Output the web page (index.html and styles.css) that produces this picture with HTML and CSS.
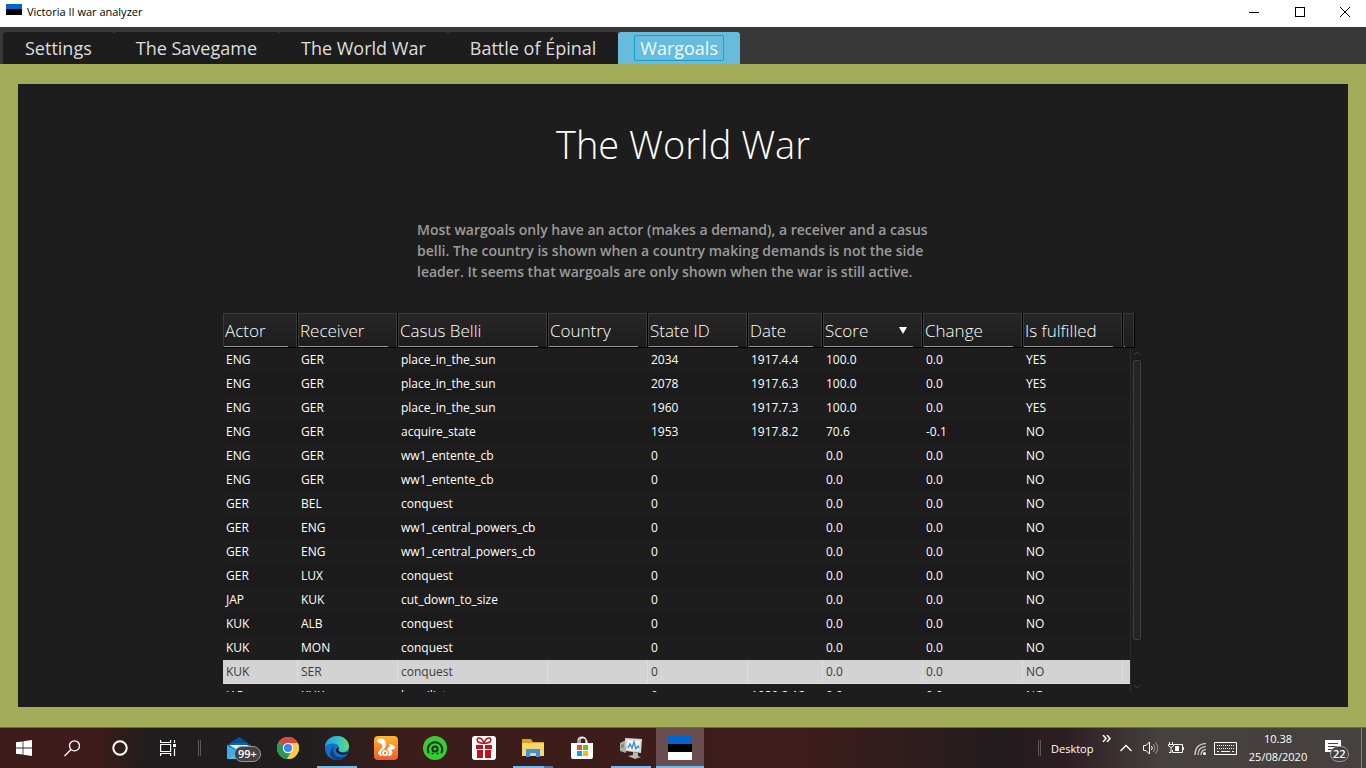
FILE: index.html
```html
<!DOCTYPE html>
<html lang="en">
<head>
<meta charset="utf-8">
<title>Victoria II war analyzer</title>
<link rel="stylesheet" href="styles.css">
</head>
<body>
<header class="titlebar">
  <span class="flag flag-small"></span>
  <span class="app-name">Victoria II war analyzer</span>
  <div class="window-controls">
    <button aria-label="Minimize"><svg width="10" height="10" shape-rendering="crispEdges"><path d="M0 5.5h10" stroke="#000"/></svg></button>
    <button aria-label="Maximize"><svg width="10" height="10" shape-rendering="crispEdges"><path d="M.5.5h9v9h-9z" fill="none" stroke="#000"/></svg></button>
    <button aria-label="Close"><svg width="10" height="10"><path d="M0 0l10 10M10 0L0 10" stroke="#000"/></svg></button>
  </div>
</header>
<nav class="tabs">
  <button class="tab">Settings</button>
  <button class="tab">The Savegame</button>
  <button class="tab">The World War</button>
  <button class="tab">Battle of Épinal</button>
  <button class="tab active"><span>Wargoals</span></button>
</nav>
<main class="frame">
  <section class="panel">
    <h1>The World War</h1>
    <p class="intro">Most wargoals only have an actor (makes a demand), a receiver and a casus<br>belli. The country is shown when a country making demands is not the side<br>leader. It seems that wargoals are only shown when the war is still active.</p>
    <div class="table-view">
      <table>
        <colgroup><col class="c75"><col class="c100"><col class="c150"><col class="c100"><col class="c100"><col class="c75"><col class="c100"><col class="c100"><col class="c100"><col></colgroup>
        <thead>
          <tr><th>Actor</th><th>Receiver</th><th>Casus Belli</th><th>Country</th><th>State ID</th><th>Date</th><th><div class="sorted">Score<svg width="8" height="7"><path d="M0 0h8L4 7z" fill="#fff"/></svg></div></th><th>Change</th><th>Is fulfilled</th><th></th></tr>
        </thead>
        <tbody>
          <tr><td>ENG</td><td>GER</td><td>place_in_the_sun</td><td></td><td>2034</td><td>1917.4.4</td><td>100.0</td><td>0.0</td><td>YES</td><td></td></tr>
          <tr><td>ENG</td><td>GER</td><td>place_in_the_sun</td><td></td><td>2078</td><td>1917.6.3</td><td>100.0</td><td>0.0</td><td>YES</td><td></td></tr>
          <tr><td>ENG</td><td>GER</td><td>place_in_the_sun</td><td></td><td>1960</td><td>1917.7.3</td><td>100.0</td><td>0.0</td><td>YES</td><td></td></tr>
          <tr><td>ENG</td><td>GER</td><td>acquire_state</td><td></td><td>1953</td><td>1917.8.2</td><td>70.6</td><td>-0.1</td><td>NO</td><td></td></tr>
          <tr><td>ENG</td><td>GER</td><td>ww1_entente_cb</td><td></td><td>0</td><td></td><td>0.0</td><td>0.0</td><td>NO</td><td></td></tr>
          <tr><td>ENG</td><td>GER</td><td>ww1_entente_cb</td><td></td><td>0</td><td></td><td>0.0</td><td>0.0</td><td>NO</td><td></td></tr>
          <tr><td>GER</td><td>BEL</td><td>conquest</td><td></td><td>0</td><td></td><td>0.0</td><td>0.0</td><td>NO</td><td></td></tr>
          <tr><td>GER</td><td>ENG</td><td>ww1_central_powers_cb</td><td></td><td>0</td><td></td><td>0.0</td><td>0.0</td><td>NO</td><td></td></tr>
          <tr><td>GER</td><td>ENG</td><td>ww1_central_powers_cb</td><td></td><td>0</td><td></td><td>0.0</td><td>0.0</td><td>NO</td><td></td></tr>
          <tr><td>GER</td><td>LUX</td><td>conquest</td><td></td><td>0</td><td></td><td>0.0</td><td>0.0</td><td>NO</td><td></td></tr>
          <tr><td>JAP</td><td>KUK</td><td>cut_down_to_size</td><td></td><td>0</td><td></td><td>0.0</td><td>0.0</td><td>NO</td><td></td></tr>
          <tr><td>KUK</td><td>ALB</td><td>conquest</td><td></td><td>0</td><td></td><td>0.0</td><td>0.0</td><td>NO</td><td></td></tr>
          <tr><td>KUK</td><td>MON</td><td>conquest</td><td></td><td>0</td><td></td><td>0.0</td><td>0.0</td><td>NO</td><td></td></tr>
          <tr class="selected"><td>KUK</td><td>SER</td><td>conquest</td><td></td><td>0</td><td></td><td>0.0</td><td>0.0</td><td>NO</td><td></td></tr>
          <tr><td>JAP</td><td>KUK</td><td>humiliate</td><td></td><td>0</td><td>1920.2.12</td><td>0.0</td><td>0.0</td><td>NO</td><td></td></tr>
        </tbody>
      </table>
      <div class="scrollbar">
        <svg width="8" height="12"><path d="M1 7l3-3 3 3" fill="none" stroke="#3c3c3c"/></svg>
        <span class="thumb"></span>
        <svg width="8" height="12"><path d="M1 5l3 3 3-3" fill="none" stroke="#3c3c3c"/></svg>
      </div>
    </div>
  </section>
</main>
<footer class="taskbar">
  <button class="task" aria-label="Start"><svg width="16" height="16"><path d="M0 2.3L6.6 1.4V7.6H0zM7.4 1.2L16 0V7.6H7.400zM0 8.400H6.600V14.600L0 13.700zM7.400 8.400H16V16L7.400 14.800z" fill="#fff"/></svg></button>
  <button class="task" aria-label="Search"><svg width="16" height="17" fill="none" stroke="#fff" stroke-width="1.300"><circle cx="10.500" cy="5.800" r="5"/><path d="M7 9.500L.5 16"/></svg></button>
  <button class="task" aria-label="Cortana"><svg width="16" height="16"><circle cx="8" cy="8" r="6.700" fill="none" stroke="#fff" stroke-width="2"/></svg></button>
  <button class="task" aria-label="Task view"><svg width="16" height="16" fill="none" stroke="#fff" stroke-width="1.200"><path d="M.6 0v2.500h10V0M.6 16v-2.500h10V16M.6 4.500h10v7H.6zM14.500 0v3M14.500 8.500V16"/><path d="M13 4h3v3h-3z" fill="#fff" stroke="none"/></svg></button>
  <span class="grip"></span>
  <div class="apps">
    <button class="task" aria-label="Mail, 99+ unread"><svg width="24" height="24"><path d="M0 9L12 1l12 8v14H0z" fill="#0a4f94"/><path d="M4 7h16v10H4z" fill="#0768b8"/><path d="M0 9l12 7-12 7z" fill="#38aef0"/><path d="M24 9l-12 7 12 7z" fill="#299ee2"/><path d="M12 15l12 8H0z" fill="#48bef6"/><path d="M2 9h20l-10 6z" fill="#e8f4fc"/></svg><span class="badge wide">99+</span></button>
    <button class="task" aria-label="Chrome"><svg width="24" height="24" viewBox="0 0 24 24"><circle cx="12" cy="12" r="11" fill="#e9b93c"/><path d="M12 12L2.500 6.500A11 11 0 0 1 21.500 6.500z" fill="#d8483c"/><path d="M2.500 6.500A11 11 0 0 0 11 23l5-8-4-3z" fill="#279b56"/><path d="M12 7h9.800A11 11 0 0 1 11 23l5-8.500z" fill="#fbcb48"/><circle cx="12" cy="12" r="5.200" fill="#fff"/><circle cx="12" cy="12" r="4.100" fill="#4285ed"/></svg></button>
    <button class="task open" aria-label="Edge"><svg width="24" height="24" viewBox="0 0 24 24"><defs><linearGradient id="edge"><stop offset="0" stop-color="#2398e0"/><stop offset=".6" stop-color="#34c6c5"/><stop offset="1" stop-color="#6bdc55"/></linearGradient></defs><circle cx="12" cy="12" r="12" fill="#1270c5"/><path d="M0 11C0 4 6 0 12 0c7 0 12 5 12 10 0 4-3 6-7 6-3 0-4-1-3-3 1-6-9-8-14-2z" fill="url(#edge)"/><path d="M9 11c-3 7 3 12 12 9-3 3-6 4-9 4C4 23 3 14 9 11z" fill="#103f82"/><path d="M14 12c-2 3 1 6 9 4l-1 2c-5 2-10 0-11-3 0-2 1-4 3-3z" fill="#2a191e"/></svg></button>
    <button class="task" aria-label="UC Browser"><svg width="24" height="24" viewBox="0 0 24 24"><defs><linearGradient id="uc" x2="0" y2="1"><stop stop-color="#fdb92d"/><stop offset="1" stop-color="#f4582a"/></linearGradient></defs><rect width="24" height="24" rx="4" fill="url(#uc)"/><path d="M4 3c5-2 9 2 8 6-1 3-3 4 0 5l4-4-1-2 4 1c2 1 3 3 1 4l-3 1c2 2 2 4-1 6H7c-3-1-4-4-1-6 2-2 3-3 2-5C7 7 4 7 3 5z" fill="#fff"/><circle cx="11" cy="17" r="3.500" fill="none" stroke="#f47a2a"/><circle cx="11" cy="17" r="1.200" fill="#f47a2a"/></svg></button>
    <button class="task" aria-label="Antivirus"><svg width="24" height="24" viewBox="0 0 24 24" fill="none" stroke="#14351a" stroke-width="2"><circle cx="12" cy="12" r="12" fill="#36ce32" stroke="none"/><path d="M5.500 16.500a7.200 7.200 0 1 1 13 0" stroke-linecap="round"/><circle cx="12" cy="13" r="2.600"/><path d="M8.500 17.500h2M13.500 17.500h2" stroke-width="1.500"/></svg></button>
    <button class="task" aria-label="Gifts"><svg width="24" height="24" viewBox="0 0 24 24"><rect width="24" height="24" rx="3" fill="#fff"/><path d="M4 9h7v4H4zM13 9h7v4h-7zM5 14h6v8H5zM13 14h6v8h-6z" fill="#b61620"/><path d="M12 7C4 8 4 2 7 2c3 0 5 5 5 5s2-5 5-5c3 0 3 6-5 5z" fill="none" stroke="#b61620" stroke-width="1.500"/></svg></button>
    <button class="task open grouped" aria-label="File Explorer"><svg width="22" height="20"><path d="M0 1h9l2 3h11v14H0z" fill="#dca21b"/><path d="M0 5h22v13H0z" fill="#fad46c"/><path d="M4 11h14v8h-4v-4H8v4H4z" fill="#3596df"/></svg></button>
    <button class="task" aria-label="Store"><svg width="24" height="24"><path d="M8 8V5q0-4 4-4t4 4v3M10 8V3q4-3 7 2v3" fill="none" stroke="#eee" stroke-width="1.200"/><path d="M1 7h22v14q0 2-2 2H3q-2 0-2-2z" fill="#fff"/><path d="M7 9h5v5H7z" fill="#f25022"/><path d="M13 9h5v5h-5z" fill="#7fba00"/><path d="M7 15h5v5H7z" fill="#00a4ef"/><path d="M13 15h5v5h-5z" fill="#ffb900"/></svg></button>
    <button class="task open" aria-label="Performance monitor"><svg width="24" height="22"><path d="M1 6l6-3v13l-6-2z" fill="#a9aea9"/><path d="M2 8l3-1v3L2 11z" fill="#5b9e47"/><path d="M6 1l17 1-1 14-15-2z" fill="#d9dad8"/><path d="M8 3l13 1-1 10-11-1z" fill="#eef5fa"/><path d="M9 11l2-4 2 4 2-6 2 7 2-3 1 2" fill="none" stroke="#3589c8" stroke-width="1.300"/><path d="M14 15l5 1v3l3 1-6 2-7-3 5-1z" fill="#b8bab8"/></svg></button>
    <button class="task open current" aria-label="Victoria II war analyzer"><span class="flag flag-large"></span></button>
  </div>
  <div class="tray">
    <span class="grip short"></span>
    <span class="toolbar-name">Desktop</span>
    <button class="more" aria-label="More"><svg width="9" height="7"><path d="M1 0l3 3.500L1 7M5 0l3 3.500L5 7" fill="none" stroke="#fff" stroke-width="1.500"/></svg></button>
    <button class="status" aria-label="Hidden icons"><svg width="12" height="8"><path d="M.5 7L6 1.500 11.500 7" fill="none" stroke="#fff" stroke-width="1.300"/></svg></button>
    <button class="status" aria-label="Volume"><svg width="16" height="14" fill="none" stroke="#fff"><path d="M.5 4.500h2.500L6.500 1v12L3 9.500H.5z"/><path d="M8.500 5q1.500 2 0 4"/><path d="M10.500 3q3 4 0 8M12.500 1q4.500 6 0 12" stroke="#98918f"/></svg></button>
    <button class="status" aria-label="Battery"><svg width="16" height="12" fill="none" stroke="#fff"><path d="M6 2.500h8.500v8h-10V8M15.500 5v3M1.500 0v2M4.500 0v2M.5 2.500h5V4q-2.500 3-5 0zM3 6v4.500H1"/><path d="M7 4h4v5H7z" fill="#fff" stroke="none"/></svg></button>
    <button class="status" aria-label="Network"><svg width="13" height="13" fill="none" stroke="#ddd" stroke-width="1.200"><path d="M1 13Q1 2 12 1.500M4 13Q4 5 12 4.500M7 13Q7 8 12 7.500"/><circle cx="10.500" cy="11.500" r="1.500" fill="#fff" stroke="none"/></svg></button>
    <button class="status" aria-label="Touch keyboard"><svg width="23" height="13" fill="none" stroke="#fff"><path d="M.5.5h22v12H.5z"/><path d="M3 3.500h17M3 6.500h17" stroke-dasharray="1 1"/><path d="M3 9.500h2M7 9.500h9M18 9.500h2"/></svg></button>
    <div class="clock"><time>10.38</time><time>25/08/2020</time></div>
    <button class="notifications" aria-label="22 notifications"><svg width="16" height="16"><path d="M0 0h16v12H8l-3 3v-3H0z" fill="#fff"/><path d="M3 3.500h10M3 6.500h10M3 9.500h6" stroke="#45413f"/></svg><span class="badge">22</span></button>
    <span class="show-desktop"></span>
  </div>
</footer>
</body>
</html>
```
FILE: styles.css
```css
* { box-sizing: border-box; }

body {
  margin: 0;
  height: 100vh;
  display: flex;
  flex-direction: column;
  overflow: hidden;
  background: #1d1d1d;
  font-family: "Open Sans", "Noto Sans", sans-serif;
}

button {
  display: flex;
  align-items: center;
  justify-content: center;
  margin: 0;
  padding: 0;
  border: 0;
  background: none;
  font: inherit;
  color: inherit;
}

svg { display: block; flex: none; }

.flag {
  flex: none;
  background: linear-gradient(#0064ca 33%, #000 33% 67%, #fff 67%);
}
.flag-small { width: 16px; height: 16px; }
.flag-large { width: 24px; height: 24px; }

.titlebar {
  display: flex;
  align-items: center;
  gap: 5px;
  height: 27px;
  padding: 0 0 4px 6px;
  background: #fff;
  color: #000;
  font-size: 11px;
}
.window-controls { display: flex; margin-left: auto; }
.window-controls button { width: 46px; height: 23px; }
.window-controls button:last-child { width: 43px; }

.tabs {
  display: flex;
  align-items: flex-end;
  height: 37px;
  padding-left: 3px;
  background: #383838;
}
.tab {
  height: 32px;
  padding: 0 22px;
  border-radius: 3px 3px 0 0;
  background: #1d1d1d;
  color: #dedede;
  font-size: 18px;
  line-height: 24px;
  white-space: nowrap;
}
.tab.active { padding: 0 16px; background: #67bbdc; color: #f2fafd; }
.tab.active span {
  padding: 0 5px;
  border: 1px solid #129fd6;
  border-radius: 2px;
}

.frame {
  flex: 1;
  min-height: 0;
  display: flex;
  padding: 20px 18px;
  background: #a2ab58;
}
.panel {
  flex: 1;
  min-width: 0;
  display: flex;
  flex-direction: column;
  align-items: center;
  padding: 32px 0 15px;
  background: #1d1d1d;
}
h1 {
  margin: 0 0 47px;
  color: #fff;
  font-size: 38px;
  font-weight: 300;
  line-height: 56px;
}
.intro {
  width: 532px;
  margin: 0 0 31px;
  color: #9b9b9b;
  font-size: 14px;
  font-weight: 600;
  line-height: 21px;
  white-space: nowrap;
}

.table-view {
  position: relative;
  flex: 1;
  min-height: 0;
  width: 920px;
  overflow: hidden;
}
table {
  width: 912px;
  table-layout: fixed;
  border-collapse: separate;
  border-spacing: 0;
  color: #fff;
}
.c75 { width: 75px; }
.c100 { width: 100px; }
.c150 { width: 150px; }
th {
  height: 35px;
  padding: 0 0 0 2px;
  border: solid #000;
  border-width: 0 1px 1px 0;
  background:
    linear-gradient(#949494, #949494) left bottom / calc(100% - 9px) 1px no-repeat,
    linear-gradient(#272727, #1d1d1d);
  background-clip: padding-box;
  box-shadow: inset 1px 1px #3a3a3a, inset -1px 0 #3a3a3a;
  font-size: 17px;
  font-weight: 300;
  text-align: left;
  white-space: nowrap;
}
.sorted { display: flex; align-items: center; justify-content: space-between; padding-right: 15px; }
td {
  height: 24px;
  padding: 0 0 0 3px;
  font-size: 12px;
  line-height: 16px;
  white-space: nowrap;
}
tbody tr:nth-child(even) { background: #1b1b1b; }
tbody tr.selected { background: #d3d3d3; color: #3a3a3a; }
.selected td { box-shadow: inset -1px -1px #dedede; }

.scrollbar {
  position: absolute;
  top: 35px;
  right: 0;
  bottom: 0;
  width: 13px;
  display: flex;
  flex-direction: column;
  align-items: center;
  border-left: 1px solid #2b2b2b;
  background: #1d1d1d;
}
.thumb {
  width: 8px;
  height: 280px;
  margin-bottom: auto;
  border: 1px solid #404040;
  border-radius: 2px;
  background: #242424;
}

.taskbar {
  display: flex;
  height: 41px;
  border-top: 1px solid #696765;
  background: linear-gradient(90deg, #3f1c1c 0, #3d1b1b 100px, #1f1d1d 150px, #201e1e 300px, #3c1d1c 410px, #3e1d1c 800px, #231c1f 1000px, #2b1d20 1060px, #46403f 1160px, #45413e 100%);
  color: #fff;
}
.task { position: relative; width: 48px; height: 40px; }
.apps { display: flex; gap: 1px; }
.open::after {
  content: "";
  position: absolute;
  left: 4px;
  right: 4px;
  bottom: 0;
  height: 2px;
  background: #76b9ed;
}
.grouped::after { background: linear-gradient(90deg, #76b9ed 31px, #51799a 31px); }
.current { background: #6a4e4d; }
.current::after { left: 0; right: 0; }
.grip {
  width: 3px;
  height: 16px;
  margin: 12px 14px 0 6px;
  border: 1px solid #5d5959;
  border-width: 0 1px;
}
.grip.short { margin: 0 10px 0 0; }
.badge {
  position: absolute;
  left: 21px;
  top: 18px;
  padding: 0 2px;
  border: 1px solid #999;
  border-radius: 9px;
  background: #444240;
  font-size: 11px;
  font-weight: 600;
  line-height: 14px;
}
.badge.wide { left: 19px; padding: 0 3px; }
.tray { display: flex; align-items: center; margin-left: auto; }
.toolbar-name { width: 51px; font-size: 11px; }
.more { width: 9px; margin-bottom: 20px; }
.status { width: 25px; height: 40px; }
.more + .status { margin-left: 2px; }
.clock {
  display: flex;
  flex-direction: column;
  align-items: center;
  width: 80px;
  font-size: 11px;
  line-height: 18px;
}
.notifications { position: relative; width: 43px; height: 40px; padding-right: 13px; }
.notifications .badge { left: 12px; }
.show-desktop { width: 5px; height: 40px; border-left: 1px solid #898583; }
```
